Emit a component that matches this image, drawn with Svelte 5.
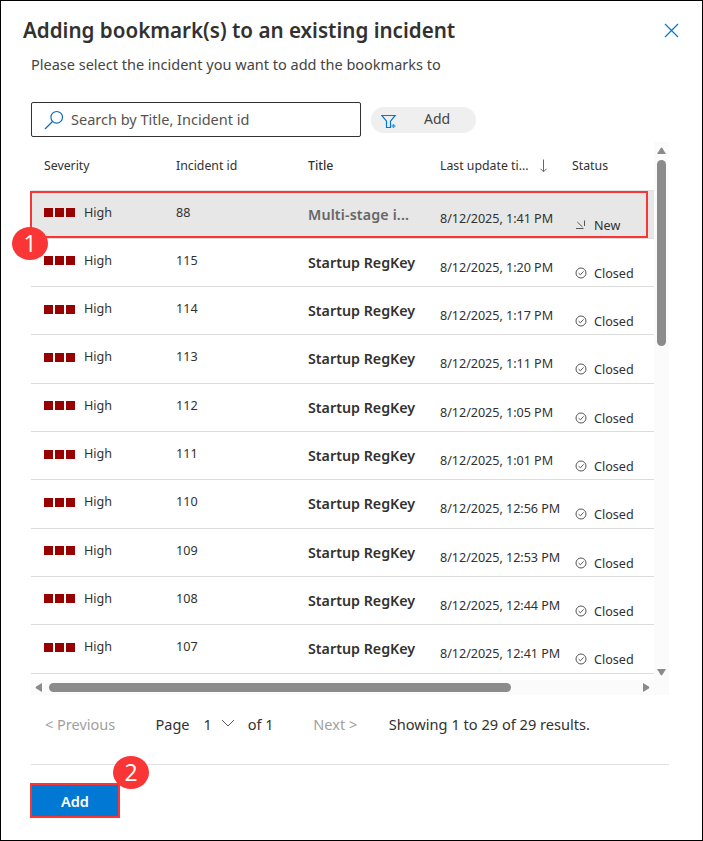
<script>
  const rows = [
    ['88', 'Multi-stage i...', '1:41 PM', 'New'],
    ['115', 'Startup RegKey', '1:20 PM', 'Closed'],
    ['114', 'Startup RegKey', '1:17 PM', 'Closed'],
    ['113', 'Startup RegKey', '1:11 PM', 'Closed'],
    ['112', 'Startup RegKey', '1:05 PM', 'Closed'],
    ['111', 'Startup RegKey', '1:01 PM', 'Closed'],
    ['110', 'Startup RegKey', '12:56 PM', 'Closed'],
    ['109', 'Startup RegKey', '12:53 PM', 'Closed'],
    ['108', 'Startup RegKey', '12:44 PM', 'Closed'],
    ['107', 'Startup RegKey', '12:41 PM', 'Closed'],
  ].map(([id, title, time, status]) => ({ id, title, date: `8/12/2025, ${time}`, status }));
</script>

<main class="dialog">
  <header>
    <h1>Adding bookmark(s) to an existing incident</h1>
    <button class="close" aria-label="Close">
      <svg width="15" height="15" viewBox="0 0 15 15"><path d="M1 1 14 14M14 1 1 14" /></svg>
    </button>
  </header>
  <p class="intro">Please select the incident you want to add the bookmarks to</p>

  <div class="tools">
    <div class="search">
      <svg width="20" height="20" viewBox="0 0 20 20"><circle cx="12.7" cy="7.3" r="5.8" /><path d="M8.5 11.5 1 19" /></svg>
      <span>Search by Title, Incident id</span>
    </div>
    <div class="filter">
      <svg width="16" height="15" viewBox="0 0 16 15"><path d="M.8 1.5h13.4L9.5 7.2v6.3h-4V7.2z" /><path class="plus" d="M12.5 10v4M10.5 12h4" /></svg>
      <span>Add</span>
    </div>
  </div>

  <div class="grid">
    <div class="table">
      <div class="head">
        <span>Severity</span>
        <span>Incident id</span>
        <span class="strong">Title</span>
        <div class="sorted">
          <span>Last update ti...</span>
          <svg width="9" height="14" viewBox="0 0 9 14"><path d="M4.5 0.5v12M1.5 9.8l3 3 3-3" /></svg>
        </div>
        <span>Status</span>
      </div>
      {#each rows as row, i}
        <div class="row" class:selected={i === 0}>
          <div class="severity"><i></i><i></i><i></i><span>High</span></div>
          <div class="id">{row.id}</div>
          <div class="title">{row.title}</div>
          <div class="date">{row.date}</div>
          <div class="status">
            {#if row.status === 'New'}
              <svg width="12" height="12" viewBox="0 0 12 12"><path d="M2.3 3 7.5 8M1 9.5h7.5M9.5 1.5V7" /></svg>
            {:else}
              <svg width="12" height="12" viewBox="0 0 12 12"><circle cx="6" cy="6" r="5" /><path d="m3.6 6.1 1.8 1.7 3.2-3.4" /></svg>
            {/if}
            <span>{row.status}</span>
          </div>
        </div>
      {/each}
    </div>
    <div class="vbar">
      <svg width="9" height="8" viewBox="0 0 9 8"><path d="M3.6 1.2Q4.5 0 5.4 1.2L9 7H0z" /></svg>
      <b></b>
      <svg width="9" height="8" viewBox="0 0 9 8"><path d="M3.6 6.8Q4.5 8 5.4 6.8L9 1H0z" /></svg>
    </div>
    <div class="mark outline"></div>
    <div class="mark badge one">1</div>
  </div>
  <div class="hbar">
    <svg width="8" height="9" viewBox="0 0 8 9"><path d="M1.2 3.6Q0 4.5 1.2 5.4L7 9V0z" /></svg>
    <b></b>
    <svg width="8" height="9" viewBox="0 0 8 9"><path d="M6.8 3.6Q8 4.5 6.8 5.4L1 9V0z" /></svg>
  </div>

  <nav>
    <span class="dim prev">&lt; Previous</span>
    <span class="page">Page</span>
    <span>1</span>
    <svg width="14" height="8" viewBox="0 0 14 8"><path d="m1 1 6 6 6-6" /></svg>
    <span class="of">of 1</span>
    <span class="dim next">Next &gt;</span>
    <span class="total">Showing 1 to 29 of 29 results.</span>
  </nav>

  <footer>
    <button class="add">Add</button>
    <div class="mark badge two">2</div>
  </footer>
</main>

<style>
  :global(body) { background: #fff; }
  .dialog {
    box-sizing: border-box; width: 703px; height: 841px; overflow: hidden;
    border: 1px solid #000; background: #fff; color: #323130;
    font-family: "Noto Sans", "Open Sans", sans-serif; font-size: 12.6px; white-space: nowrap;
    display: flex; flex-direction: column; padding: 0 33px 0 30px;
  }
  .dialog > * { flex: none; }
  svg { fill: none; stroke: #0078d4; flex: none; }
  button { border: 0; padding: 0; font: inherit; background: none; }
  header { height: 50px; margin: 0 -10px 0 -8px; display: flex; align-items: center; justify-content: space-between; padding-top: 8px; box-sizing: border-box; }
  h1 { margin: 0; font-size: 20.6px; line-height: 28px; font-weight: 600; }
  .close { display: flex; }
  .close path { stroke: #0078d4; stroke-width: 1.2; }
  .intro { margin: 3px 0 1px; height: 20px; line-height: 20px; font-size: 14.5px; color: #444; }
  .tools { margin-top: 27px; display: flex; gap: 10px; align-items: center; height: 35px; }
  .search { box-sizing: border-box; width: 330px; height: 35px; border: 1px solid #323130; border-radius: 2px; display: flex; align-items: center; gap: 7px; padding-left: 12px; font-size: 14.5px; color: #55534f; }
  .search span { padding-bottom: 2px; }
  .search svg { stroke: #0f6cbd; stroke-width: 1.2; }
  .filter { width: 105px; height: 26px; border-radius: 13px; background: #efefef; display: flex; align-items: center; font-size: 14px; padding-left: 10px; box-sizing: border-box; gap: 27px; color: #444; }
  .filter span { padding-bottom: 2px; }
  .filter svg { margin-top: 3px; stroke-width: 1.2; }
  .filter .plus { stroke-width: 1.6; opacity: .7; }
  .grid { position: relative; margin-top: 5px; height: 538px; display: flex; }
  .table { width: 623px; }
  .head, .row { display: grid; grid-template-columns: repeat(4, 132px) 82px; padding-left: 13px; box-sizing: border-box; }
  .head { height: 48.6px; font-size: 12.3px; line-height: 20px; padding-top: 14px; border-bottom: 1px solid #e1e1e1; }
  .strong { font-weight: 500; }
  .sorted { display: flex; align-items: center; gap: 10px; height: 20px; }
  .sorted svg { stroke: #666; }
  .row { height: 48.3px; line-height: 18px; border-bottom: 1px solid #dcdcdc; }
  .selected { background: #e7e7e7; }
  .severity { display: flex; align-items: center; gap: 2px; height: 18px; margin-top: 13px; }
  .severity i { width: 9px; height: 9px; background: #900; }
  .severity span { margin-left: 7px; }
  .id { margin-top: 13px; }
  .title { margin-top: 15px; font-size: 14.25px; font-weight: 600; }
  .selected .title { color: #666; letter-spacing: .15px; }
  .date { margin-top: 20px; letter-spacing: -.04px; }
  .selected .date { margin-top: 19.5px; }
  .status { margin-top: 26px; display: flex; align-items: center; height: 18px; gap: 7px; padding-left: 3px; }
  .status svg { stroke: #555; margin-top: -2px; }
  .vbar { width: 15px; background: #fbfbfb; display: flex; flex-direction: column; align-items: center; padding-top: 5px; box-sizing: border-box; }
  .vbar svg, .hbar svg { fill: #8b8b8b; stroke: none; }
  .vbar b { width: 9px; height: 186px; margin: 5px 0 auto; border-radius: 5px; background: #8b8b8b; }
  .vbar svg:last-child { margin-bottom: 4px; }
  .hbar { height: 15px; width: 638px; background: #fbfbfb; display: flex; align-items: center; padding: 0 19px 0 4px; box-sizing: border-box; }
  .hbar b { height: 9px; width: 462px; margin: 0 auto 0 6px; border-radius: 5px; background: #8b8b8b; }
  .mark { position: absolute; box-sizing: border-box; }
  .outline { left: -1px; top: 49px; width: 618px; height: 47px; border: 2px solid #f93536; }
  .badge { width: 36px; height: 33px; border-radius: 50%; background: #f93536; color: #fff; font: 23px/33px "Open Sans", sans-serif; text-align: center; }
  .one { left: -19px; top: 85px; }
  nav { display: flex; align-items: center; height: 20px; margin-top: 19px; font-size: 14.5px; line-height: 20px; }
  nav svg { stroke: #555; margin: -2px 0 0 9px; }
  .dim { color: #a19f9d; }
  .prev { width: 110.5px; padding-left: 14px; }
  .page { width: 48px; }
  .of { margin-left: 13px; width: 65.5px; }
  .next { width: 75.5px; }
  .total { font-size: 14.6px; }
  footer { position: relative; width: 638px; margin-top: 30px; border-top: 1px solid #e1e1e1; padding-top: 18px; display: flex; }
  .add { margin-left: -1px; box-sizing: border-box; width: 90px; height: 35px; border: 2px solid #f93536; background: #0078d4; color: #fff; font-size: 14.5px; font-weight: 600; }
  .two { left: 82px; top: -9px; }
</style>
